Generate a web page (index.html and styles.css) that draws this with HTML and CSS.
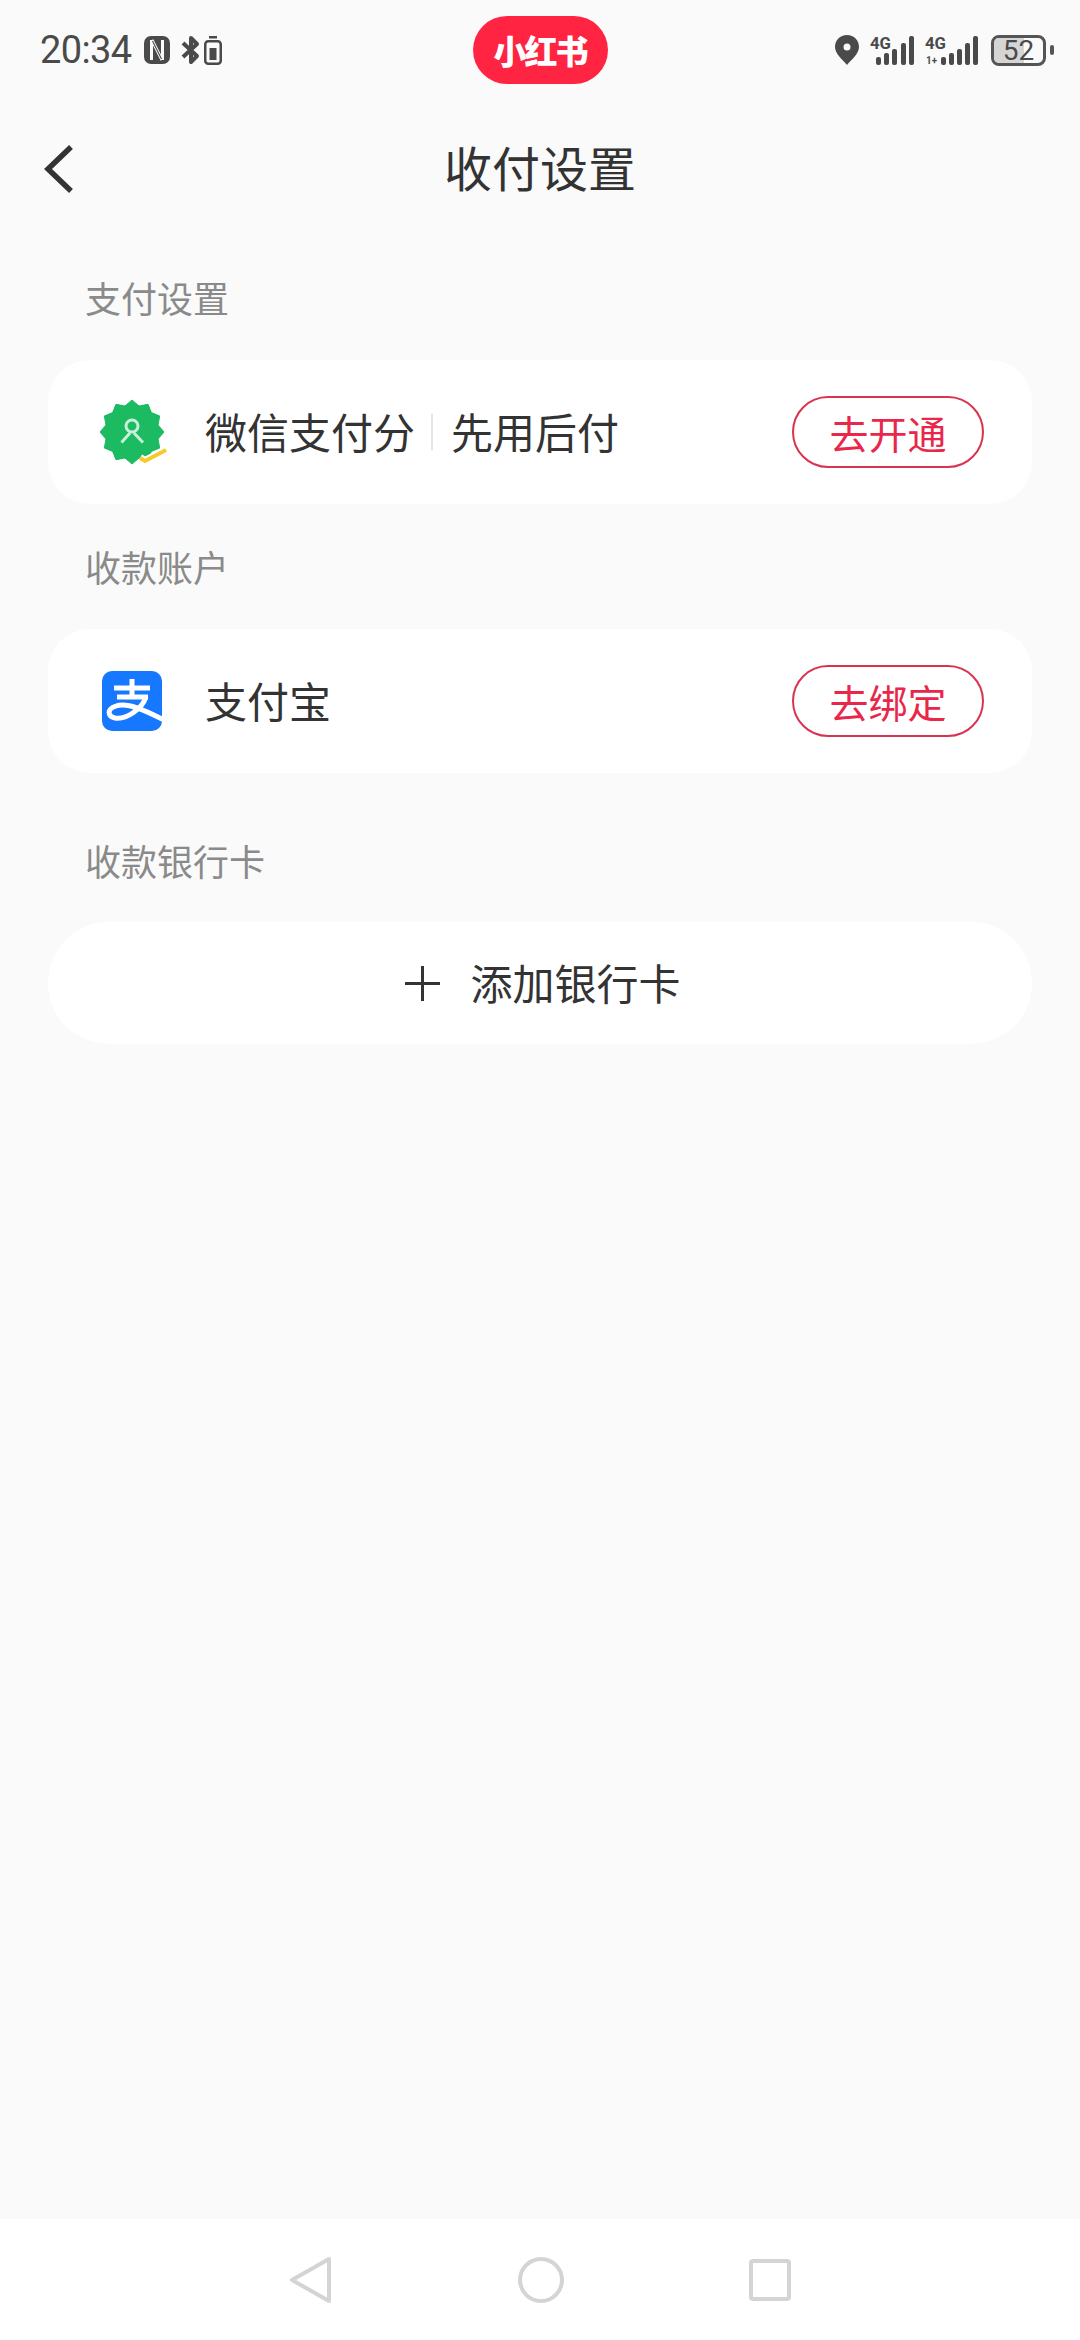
FILE: index.html
```html
<!DOCTYPE html>
<html lang="zh-CN">
<head>
<meta charset="utf-8">
<title>收付设置</title>
<link rel="stylesheet" href="styles.css">
</head>
<body>
<div class="page">
  <div class="status">
    <div class="status-left">
      <span class="time">20:34</span>
      <svg class="ic-nfc" width="26" height="28" viewBox="0 0 26 28"><rect width="26" height="28" rx="7" fill="#4a4a4a"/><path d="M7.5 4v20M18.5 4v20M8 4l10 20" fill="none" stroke="#fafafa" stroke-width="3"/><path d="M8.5 5l9 18" stroke="#4a4a4a" stroke-width="1.1" fill="none"/></svg>
      <svg class="ic-bt" width="19" height="30" viewBox="0 0 19 30"><path d="M2 8l14 13-6 6V3l6 6L2 22" fill="none" stroke="#4a4a4a" stroke-width="4" stroke-linejoin="round"/></svg>
      <svg class="ic-cell" width="18" height="30" viewBox="0 0 18 30"><rect x="5" y="1" width="8" height="2.5" fill="#4a4a4a"/><rect x="1.25" y="6.25" width="15.5" height="22.5" rx="3" fill="none" stroke="#4a4a4a" stroke-width="2.5"/><rect x="5.5" y="13" width="7" height="12" fill="#4a4a4a"/></svg>
    </div>
    <div class="brand">小红书</div>
    <div class="status-right">
      <svg width="24" height="30" viewBox="0 0 24 30"><path fill-rule="evenodd" d="M12 0C5 0 0 5 0 12c0 7 8 13 12 18 4-5 12-11 12-18C24 5 19 0 12 0zm0 8.5a3.5 3.5 0 1 1 0 7 3.5 3.5 0 0 1 0-7z" fill="#4a4a4a"/></svg>
      <svg class="sig1" width="45" height="32" viewBox="0 0 45 32"><text x="1" y="15" textLength="21" lengthAdjust="spacingAndGlyphs" class="sig-text">4G</text><rect x="7" y="23" width="5" height="8" rx="2"/><rect x="15" y="19" width="5" height="12" rx="2"/><rect x="23" y="15" width="5" height="16" rx="2"/><rect x="32" y="9" width="5" height="22" rx="2"/><rect x="40" y="2" width="5" height="29" rx="2"/></svg>
      <svg class="sig2" width="54" height="32" viewBox="0 0 54 32"><text x="0" y="15" textLength="21" lengthAdjust="spacingAndGlyphs" class="sig-text">4G</text><text x="1" y="30" textLength="11" lengthAdjust="spacingAndGlyphs" class="sig-small">1+</text><rect x="16" y="23" width="5" height="8" rx="2"/><rect x="24" y="19" width="5" height="12" rx="2"/><rect x="32" y="15" width="5" height="16" rx="2"/><rect x="40" y="9" width="5" height="22" rx="2"/><rect x="48" y="2" width="5" height="29" rx="2"/></svg>
      <div class="battery"><div class="battery-body"><div class="battery-fill"></div><span class="battery-num">52</span></div><div class="battery-nub"></div></div>
    </div>
  </div>

  <div class="header">
    <svg class="back" width="30" height="50" viewBox="0 0 30 50"><path d="M27 3L4 25l23 22" fill="none" stroke="#333" stroke-width="5.5"/></svg>
    <h1 class="title">收付设置</h1>
  </div>

  <main class="content">
    <div class="label">支付设置</div>
    <div class="card">
      <div class="icon">
        <svg width="70" height="70" viewBox="0 0 70 70"><polygon points="35,3 42,9 51,7.3 54.400,15.600 62.700,19 61,28 67,35 61,42 62.700,51 54.400,54.400 51,62.700 42,61 35,67 28,61 19,62.700 15.600,54.400 7.300,51 9,42 3,35 9,28 7.300,19 15.600,15.600 19,7.300 28,9" fill="#1cbb61" stroke="#1cbb61" stroke-width="1" stroke-linejoin="round"/><circle cx="35" cy="29" r="6" fill="none" stroke="#c9f0d8" stroke-width="3"/><path d="M33 36l-8.500 9.500M37 36l9 9.500" stroke="#c9f0d8" stroke-width="3" fill="none"/><path d="M43 61l5 3 21-11" fill="none" stroke="#fff" stroke-width="8"/><path d="M43 61l5 3 21-11" fill="none" stroke="#f7c92e" stroke-width="4"/></svg>
      </div>
      <span class="name">微信支付分</span>
      <span class="sep"></span>
      <span class="name">先用后付</span>
      <span class="btn">去开通</span>
    </div>

    <div class="label">收款账户</div>
    <div class="card">
      <div class="icon">
        <svg width="60" height="60" viewBox="0 0 60 60"><defs><clipPath id="ali"><rect width="60" height="60" rx="10"/></clipPath></defs><rect width="60" height="60" rx="10" fill="#1677ff"/><g clip-path="url(#ali)" fill="none" stroke="#fff" stroke-width="5"><path d="M12 17h36M30 8v18M15 26h31"/><path d="M44 26C40 38 24 49 13 47 5 45 5 38 14 35 26 31 44 40 62 49"/></g></svg>
      </div>
      <span class="name">支付宝</span>
      <span class="btn">去绑定</span>
    </div>

    <div class="label label-bank">收款银行卡</div>
    <div class="add">
      <svg width="35" height="35" viewBox="0 0 35 35"><path d="M0 17.500h35M17.500 0v35" stroke="#333" stroke-width="3" fill="none"/></svg>
      <span class="name">添加银行卡</span>
    </div>
  </main>

  <nav class="navbar">
    <svg width="44" height="48" viewBox="0 0 44 48"><path d="M40 3L3 24l37 21z" fill="none" stroke="#d4d4d4" stroke-width="4" stroke-linejoin="round"/></svg>
    <svg width="46" height="46" viewBox="0 0 46 46"><circle cx="23" cy="23" r="21" fill="none" stroke="#d4d4d4" stroke-width="4"/></svg>
    <svg width="42" height="42" viewBox="0 0 42 42"><rect x="2" y="2" width="38" height="38" rx="2" fill="none" stroke="#d4d4d4" stroke-width="4"/></svg>
  </nav>
</div>
</body>
</html>
```
FILE: styles.css
```css
* { box-sizing: border-box; }
html, body { margin: 0; padding: 0; }
body {
  font-family: "Noto Sans CJK SC", "Noto Sans", sans-serif;
  color: #333;
  background: #fafafa;
}
.page {
  width: 1080px;
  height: 2340px;
  display: flex;
  flex-direction: column;
  overflow: hidden;
}
.status {
  height: 100px;
  display: grid;
  grid-template-columns: 1fr 135px 1fr;
  align-items: center;
  padding: 0 26px 0 26px;
  flex-shrink: 0;
}
.status-left { display: flex; align-items: center; padding-left: 14px; }
.time {
  font-family: Roboto, sans-serif;
  font-size: 38px;
  line-height: 40px;
  color: #4a4a4a;
  letter-spacing: -0.6px;
  width: 104px;
}
.ic-bt { margin-left: 11px; }
.ic-cell { margin-left: 4px; }
.brand {
  height: 68px;
  border-radius: 34px;
  background: #ff2442;
  color: #fff;
  font-weight: 900;
  font-size: 33px;
  line-height: 68px;
  text-align: center;
  letter-spacing: -2px;
}
.status-right {
  display: flex;
  align-items: center;
  justify-content: flex-end;
}
.status-right svg { fill: #4a4a4a; }
.sig1 { margin-left: 10px; }
.sig2 { margin-left: 11px; }
.sig-text {
  font-family: Roboto, sans-serif;
  font-weight: 700;
  font-size: 17px;
  fill: #4a4a4a;
}
.sig-small {
  font-family: Roboto, sans-serif;
  font-weight: 700;
  font-size: 10px;
  fill: #4a4a4a;
}
.battery { display: flex; align-items: center; margin-left: 12px; }
.battery-body {
  width: 55px;
  height: 31px;
  border: 3px solid #555;
  border-radius: 8px;
  position: relative;
  display: flex;
  align-items: center;
  justify-content: center;
}
.battery-fill {
  position: absolute;
  left: 0;
  top: 0;
  bottom: 0;
  width: 62%;
  border-radius: 5px 0 0 5px;
  background: #d5d5d5;
}
.battery-num {
  position: relative;
  font-family: "Liberation Sans Narrow", Roboto, sans-serif;
  font-size: 28px;
  line-height: 25px;
  color: #4a4a4a;
}
.battery-nub {
  width: 4px;
  height: 10px;
  margin-left: 4px;
  background: #555;
  border-radius: 2px;
}
.header {
  height: 135px;
  position: relative;
  display: flex;
  align-items: center;
  justify-content: center;
  padding-bottom: 3px;
  flex-shrink: 0;
}
.back { position: absolute; left: 44px; top: 44px; }
.title {
  margin: 0;
  font-size: 48px;
  font-weight: 400;
  line-height: 68px;
  color: #333;
}
.content {
  flex: 1;
  padding: 0 48px;
}
.label {
  height: 50px;
  margin: 38px 0 37px;
  padding-left: 37px;
  font-size: 36px;
  line-height: 48px;
  color: #8a8a8a;
}
.label-bank { margin: 63px 0 36px; }
.card {
  height: 144px;
  background: #fff;
  border-radius: 42px;
  display: flex;
  align-items: center;
  padding: 0 48px 0 54px;
}
.icon {
  width: 60px;
  height: 60px;
  margin-right: 43px;
  display: flex;
  align-items: center;
  justify-content: center;
  flex-shrink: 0;
}
.icon svg { flex-shrink: 0; }
.name {
  font-size: 42px;
  line-height: 60px;
  padding-bottom: 3px;
  color: #333;
}
.sep {
  width: 2px;
  height: 36px;
  margin: 0 18px 0 16px;
  background: #e6e6e6;
}
.btn {
  margin-left: auto;
  width: 192px;
  height: 72px;
  border: 2px solid #d8334f;
  border-radius: 36px;
  display: flex;
  align-items: center;
  justify-content: center;
  font-size: 39px;
  color: #e8274b;
}
.add {
  height: 122px;
  background: #fff;
  border-radius: 61px;
  display: flex;
  align-items: center;
  justify-content: center;
  gap: 30px;
  padding-left: 6px;
}
.navbar {
  height: 121px;
  background: #fff;
  flex-shrink: 0;
  display: flex;
  justify-content: center;
  align-items: center;
  gap: 185px;
}
```
